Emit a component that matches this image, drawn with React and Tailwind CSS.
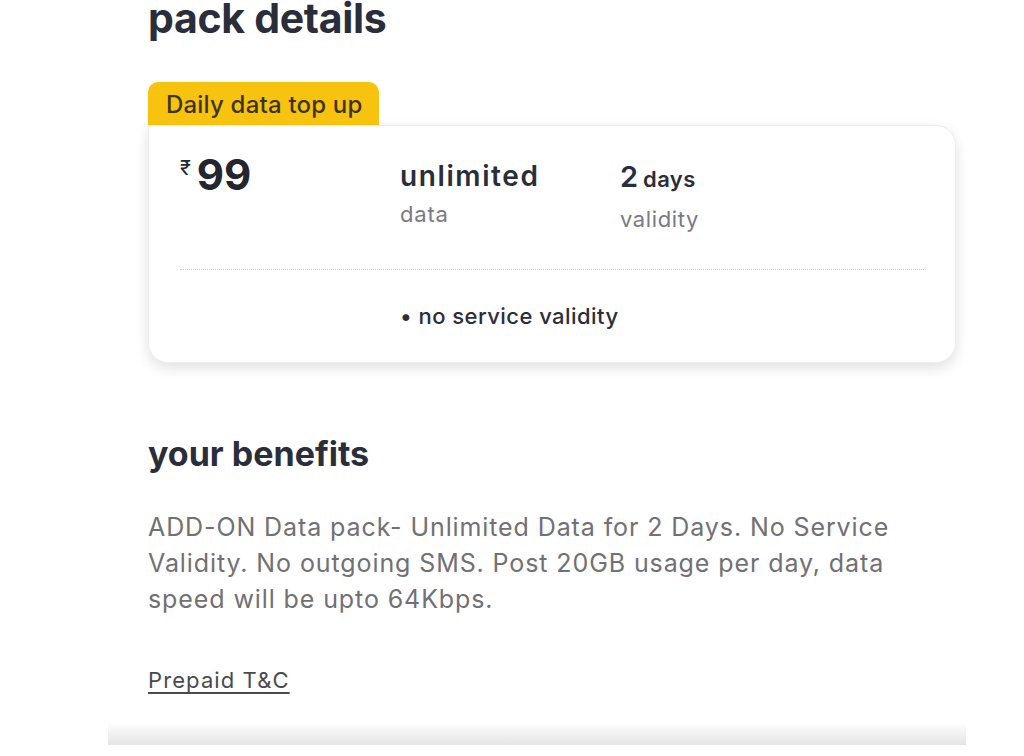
import React from 'react';

const font = { fontFamily: 'Inter, "Noto Sans", sans-serif' };

export default function App() {
  return (
    <div className="w-[1024px] h-[756px] bg-white overflow-hidden relative" style={font}>
      <div className="pl-[148px] pr-[68px]">
        <h1 className="text-[41px] leading-[36px] font-bold text-[#2a2d3a] tracking-[-0.3px]">pack details</h1>

        <div className="mt-[46px]">
          <div className="inline-block bg-[#f8c30f] rounded-t-[10px] pl-[18px] pr-[16px] h-[43px] pt-[2px] leading-[41px] text-[24px] font-medium text-[#3b3520] tracking-[0.2px]">
            Daily data top up
          </div>
          <div className="w-[808px] bg-white rounded-[20px] rounded-tl-none shadow-[0_5px_14px_rgba(0,0,0,0.12)] border border-[#ededed] px-[31px] pt-[28px] pb-[32px]">
            <div className="flex items-start">
              <div className="w-[220px] flex items-start text-[#23252f]">
                <span className="text-[20px] leading-[20px] mt-[4px] mr-[6px]">₹</span>
                <span className="text-[42px] leading-[42px] font-bold">99</span>
              </div>
              <div className="w-[220px] pt-[5px]">
                <div className="text-[28px] leading-[34px] font-semibold text-[#2a2d3a] tracking-[1.6px]">unlimited</div>
                <div className="text-[22px] leading-[30px] text-[#7a7a80] mt-[6px] tracking-[0.8px]">data</div>
              </div>
              <div className="pt-[6px]">
                <div className="text-[#2a2d3a] font-semibold">
                  <span className="text-[29px] leading-[34px]">2</span>
                  <span className="text-[22px] leading-[34px] ml-[5px] tracking-[0.4px]">days</span>
                </div>
                <div className="text-[22px] leading-[30px] text-[#7a7a80] mt-[8px] tracking-[0.6px]">validity</div>
              </div>
            </div>
            <div className="border-t border-dotted border-[#cfcfcf] mt-[35px]" />
            <div className="pl-[220px] pt-[32px] text-[22px] leading-[28px] font-medium text-[#2a2d3a] tracking-[0.45px]">
              • no service validity
            </div>
          </div>
        </div>

        <h2 className="mt-[71px] text-[34px] leading-[40px] font-bold text-[#2a2d3a]">your benefits</h2>
        <p className="mt-[35px] text-[25px] leading-[36px] text-[#707075] tracking-[0.9px] w-[790px]">
          ADD-ON Data pack- Unlimited Data for 2 Days. No Service Validity. No outgoing SMS. Post 20GB usage per day, data speed will be upto 64Kbps.
        </p>
        <a href="#" className="inline-block mt-[49px] text-[22px] leading-[28px] text-[#4a4a4e] tracking-[1.1px] underline underline-offset-[4px]">Prepaid T&amp;C</a>
      </div>
      <div className="absolute left-[108px] top-[722px] w-[858px] h-[23px] bg-gradient-to-b from-white to-[#e4e4e4]" />
    </div>
  );
}
